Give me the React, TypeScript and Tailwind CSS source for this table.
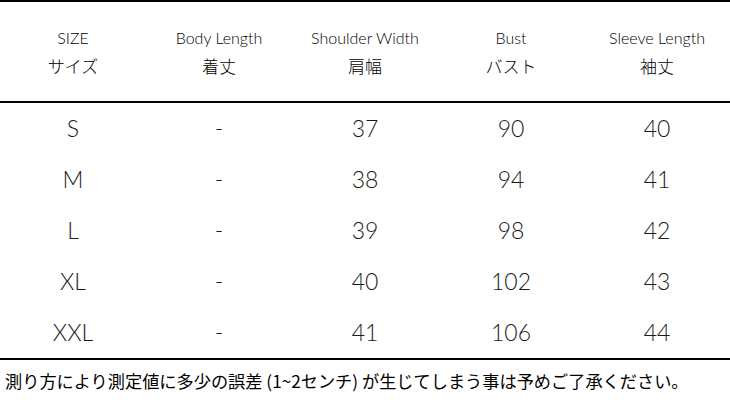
import React from "react";

const HEAD = [
  { en: "SIZE", ja: "サイズ" },
  { en: "Body Length", ja: "着丈" },
  { en: "Shoulder Width", ja: "肩幅" },
  { en: "Bust", ja: "バスト" },
  { en: "Sleeve Length", ja: "袖丈" },
];

const ROWS = [
  ["S", "-", "37", "90", "40"],
  ["M", "-", "38", "94", "41"],
  ["L", "-", "39", "98", "42"],
  ["XL", "-", "40", "102", "43"],
  ["XXL", "-", "41", "106", "44"],
];

const latin = { fontFamily: "Lato, 'Noto Sans CJK JP', sans-serif" };
const jp = { fontFamily: "'Noto Sans CJK JP', sans-serif" };

export default function App() {
  return (
    <div className="w-[730px] h-[400px] bg-white text-[#1a1a1a] overflow-hidden">
      <div className="h-[2px] bg-black" />

      {/* header */}
      <div className="grid h-[99px] grid-cols-5">
        {HEAD.map((h) => (
          <div key={h.en} className="flex flex-col items-center justify-center gap-[4px]">
            <span className="text-[16px] font-light leading-[24px] text-black" style={latin}>{h.en}</span>
            <span className="text-[17px] font-light leading-[24px] text-black" style={jp}>{h.ja}</span>
          </div>
        ))}
      </div>

      <div className="h-[2px] bg-black" />

      {/* rows */}
      {ROWS.map((r) => (
        <div key={r[0]} className="grid h-[51px] grid-cols-5">
          {r.map((c, i) => (
            <div key={i} className="flex items-center justify-center text-[23px] font-light" style={latin}>{c}</div>
          ))}
        </div>
      ))}

      <div className="h-[2px] bg-black" />

      <p className="mt-[10px] pl-[5px] text-[17.2px] leading-[22px] font-normal text-black" style={jp}>
        測り方により測定値に多少の誤差 (1~2センチ) が生じてしまう事は予めご了承ください。
      </p>
    </div>
  );
}
